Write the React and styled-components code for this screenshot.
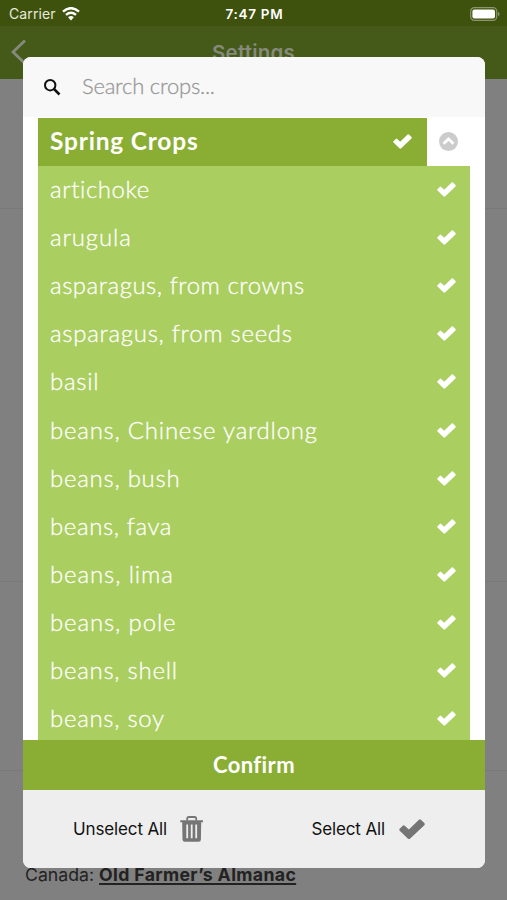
import React from 'react'
import styled, { createGlobalStyle } from 'styled-components'

const GlobalStyle = createGlobalStyle`
  * {
    box-sizing: border-box;
  }

  body {
    margin: 0;
    font-family: Inter, 'Liberation Sans', sans-serif;
  }
`

const Screen = styled.div`
  position: relative;
  display: flex;
  flex-direction: column;
  width: 507px;
  height: 900px;
  overflow: hidden;
  background-color: #808080;
`

const StatusBar = styled.div`
  display: grid;
  grid-template-columns: 1fr auto 1fr;
  align-items: center;
  height: 26px;
  padding: 1px 7px 0 9px;
  background-color: #3f520d;
  color: #fff;
  font-size: 14px;
  line-height: 24px;
`

const Carrier = styled.div`
  display: flex;
  align-items: center;
  gap: 6px;
  color: #e6ead9;
  letter-spacing: 0.1px;
`

const Time = styled.div`
  font-size: 13.5px;
  font-weight: 600;
  letter-spacing: 0.7px;
`

const Battery = styled.div`
  display: flex;
  justify-content: flex-end;
`

const NavBar = styled.div`
  display: grid;
  grid-template-columns: 40px 1fr 40px;
  height: 53px;
  padding-top: 13px;
  background-color: #455a18;
  color: #858a7c;
`

const Title = styled.div`
  font-size: 20.5px;
  font-weight: 600;
  letter-spacing: 0.2px;
  line-height: 27px;
  text-align: center;
`

const BackIcon = styled.svg`
  margin-left: 11px;
`

const Section = styled.div`
  flex: 0 0 ${({ $height }) => $height}px;
  border-bottom: 1px solid #797979;
`

const Source = styled.div`
  padding: 92px 0 0 25px;
  color: #222;
  font-size: 17.7px;
  line-height: 24px;
  white-space: nowrap;
`

const SourceLink = styled.span`
  font-weight: 700;
  letter-spacing: 0.35px;
  text-decoration: underline;
  text-decoration-thickness: 2px;
  text-underline-offset: 2px;
`

const Modal = styled.div`
  position: absolute;
  top: 57px;
  left: 23px;
  display: flex;
  flex-direction: column;
  width: 462px;
  height: 811px;
  overflow: hidden;
  border-radius: 8px;
  background-color: #fff;
`

const SearchBar = styled.div`
  display: flex;
  flex: 0 0 60px;
  align-items: center;
  gap: 20px;
  padding-left: 20px;
  background-color: #f8f8f8;
`

const Placeholder = styled.div`
  padding-bottom: 4px;
  color: #999;
  font-family: Lato, sans-serif;
  font-size: 22px;
  font-weight: 300;
  letter-spacing: -0.22px;
  -webkit-text-stroke: 0.3px #999;
`

const List = styled.div`
  flex: 1;
  overflow: hidden;
  padding: 0.5px 15px 0;
`

const GroupRow = styled.div`
  display: flex;
  height: 48px;
`

const GroupName = styled.div`
  display: flex;
  align-items: center;
  justify-content: space-between;
  width: 389px;
  padding: 0 15px 0 12px;
  background-color: #8aae33;
  color: #fff;
  font-family: Lato, sans-serif;
  font-size: 24.5px;
  font-weight: 700;
  letter-spacing: 0.8px;
`

const GroupLabel = styled.span`
  padding-bottom: 2px;
`

const Toggle = styled.div`
  display: flex;
  flex: 1;
  align-items: center;
  justify-content: center;
`

const Crop = styled.div`
  display: flex;
  align-items: center;
  justify-content: space-between;
  height: 48.1px;
  padding: 0 14px 0 12px;
  background-color: #aace5f;
  color: #fff;
  font-family: Lato, sans-serif;
  font-size: 24px;
  font-weight: 300;
`

const CropName = styled.span`
  padding-bottom: 2px;
  letter-spacing: ${({ $spacing }) => $spacing}px;
  -webkit-text-stroke: 0.3px #fff;
`

const Confirm = styled.div`
  display: flex;
  flex: 0 0 50px;
  align-items: center;
  justify-content: center;
  padding-bottom: 1px;
  background-color: #8aae33;
  color: #fff;
  font-family: Lato, sans-serif;
  font-size: 22px;
  font-weight: 700;
  font-variant-ligatures: none;
  letter-spacing: 0.4px;
`

const Footer = styled.div`
  display: flex;
  flex: 0 0 78px;
  justify-content: space-between;
  padding: 0 60px 0 50px;
  background-color: #eee;
`

const Action = styled.div`
  display: flex;
  align-items: center;
  gap: ${({ $gap }) => $gap}px;
  color: #111;
  font-size: 17px;
  letter-spacing: -0.13px;
`

const Check = ({ width = 19, color = '#fff' }) => (
  <svg width={width} height={(width * 15) / 19} viewBox="0 0 19 15">
    <path
      d="M14.6 0.5Q15.4 0 16 0.6L18.5 3Q19.2 3.8 18.5 4.5L8.2 14.3Q7.3 15.1 6.4 14.3L0.5 8.6Q-0.1 7.9 0.5 7.2L2.7 4.9Q3.4 4.2 4.2 4.9L7.2 7.7Z"
      fill={color}
    />
  </svg>
)

const crops = [
  { name: 'artichoke', spacing: 0.56 },
  { name: 'arugula', spacing: 0.85 },
  { name: 'asparagus, from crowns', spacing: 0.52 },
  { name: 'asparagus, from seeds', spacing: 0.71 },
  { name: 'basil', spacing: 0.7 },
  { name: 'beans, Chinese yardlong', spacing: 0.76 },
  { name: 'beans, bush', spacing: 0.73 },
  { name: 'beans, fava', spacing: 0.6 },
  { name: 'beans, lima', spacing: 0.88 },
  { name: 'beans, pole', spacing: 0.86 },
  { name: 'beans, shell', spacing: 0.72 },
  { name: 'beans, soy', spacing: 0.7 },
]

const CropPicker = () => (
  <Modal>
    <SearchBar>
      <svg width="19" height="19" viewBox="0 0 19 19" fill="none" stroke="#111">
        <circle cx="7.2" cy="7.2" r="5.2" strokeWidth="2" />
        <path d="M11 11L16.5 16.5" strokeWidth="2.5" />
      </svg>
      <Placeholder>Search crops...</Placeholder>
    </SearchBar>
    <List>
      <GroupRow>
        <GroupName>
          <GroupLabel>Spring Crops</GroupLabel>
          <Check />
        </GroupName>
        <Toggle>
          <svg width="19" height="19" viewBox="0 0 19 19">
            <circle cx="9.5" cy="9.5" r="9.5" fill="#ccc" />
            <path
              d="M4.5 11.8L9.5 7L14.5 11.8"
              fill="none"
              stroke="#fff"
              strokeWidth="2.8"
            />
          </svg>
        </Toggle>
      </GroupRow>
      {crops.map(({ name, spacing }) => (
        <Crop key={name}>
          <CropName $spacing={spacing}>{name}</CropName>
          <Check />
        </Crop>
      ))}
    </List>
    <Confirm>Confirm</Confirm>
    <Footer>
      <Action $gap={13}>
        Unselect All
        <svg width="24" height="26" viewBox="0 0 24 26" fill="none" stroke="#757575">
          <path d="M7.2 4.5V2.6Q7.2 1 8.8 1H14.6Q16.2 1 16.2 2.6V4.5" strokeWidth="1.8" />
          <path d="M0.3 5.2H23" strokeWidth="2" />
          <path
            d="M2.2 5H21.2L20.9 23.5Q20.8 25.8 18.7 25.8H4.8Q2.6 25.8 2.5 23.5Z"
            fill="#757575"
            stroke="none"
          />
          <path d="M7.2 8.5V22.3M11.7 8.5V22.3M16.2 8.5V22.3" stroke="#eee" strokeWidth="1.8" />
        </svg>
      </Action>
      <Action $gap={14}>
        Select All
        <Check width={26} color="#757575" />
      </Action>
    </Footer>
  </Modal>
)

const App = () => (
  <>
    <GlobalStyle />
    <Screen>
      <StatusBar>
        <Carrier>
          Carrier
          <svg width="18" height="14" viewBox="0 0 18 14" fill="none" stroke="#fff">
            <path d="M1 4.6Q9 -2.2 17 4.6" strokeWidth="2.5" />
            <path d="M4 7.8Q9 3.6 14 7.8" strokeWidth="2.4" />
            <path d="M6.1 10.3Q9 7.9 11.9 10.3L9 13.5Z" fill="#fff" stroke="none" />
          </svg>
        </Carrier>
        <Time>7:47 PM</Time>
        <Battery>
          <svg width="30" height="14" viewBox="0 0 30 14">
            <rect x="0.7" y="0.7" width="26" height="12.6" rx="3.6" fill="none" stroke="#8b966f" strokeWidth="1.2" />
            <rect x="2.4" y="2.4" width="22.6" height="9.2" rx="2" fill="#fff" />
            <path d="M28 4.8Q29.6 5.6 29.6 7Q29.6 8.4 28 9.2Z" fill="#8b966f" />
          </svg>
        </Battery>
      </StatusBar>
      <NavBar>
        <BackIcon width="16" height="26" viewBox="0 0 16 26">
          <path d="M14 1.5L2 13L14 24.5" fill="none" stroke="#858a7c" strokeWidth="2.8" />
        </BackIcon>
        <Title>Settings</Title>
      </NavBar>
      <Section $height={130} />
      <Section $height={373} />
      <Section $height={189} />
      <Source>
        Canada: <SourceLink>Old Farmer’s Almanac</SourceLink>
      </Source>
      <CropPicker />
    </Screen>
  </>
)

export default App
